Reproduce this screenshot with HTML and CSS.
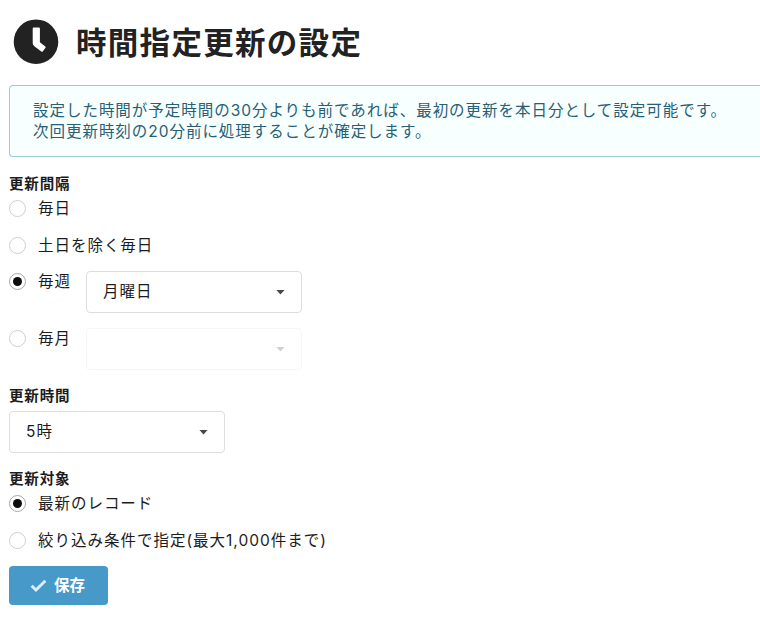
FILE: index.html
```html
<!DOCTYPE html>
<html lang="ja">
<head>
<meta charset="utf-8">
<title>時間指定更新の設定</title>
<link rel="stylesheet" href="styles.css">
</head>
<body>
<main class="page">
  <h1 class="title">
    <svg class="clock" viewBox="0 0 46 46"><circle cx="23" cy="22.700" r="22.300" fill="#222"/><path fill="#fff" d="M20.700 8.500h5.200q1 0 1 1v13.700l5.400 4.200q.8.600.2 1.400l-2.800 3.600q-.6.800-1.400.2l-7-5.300q-1.600-1.200-1.600-3.200V9.500q0-1 1-1z"/></svg>
    <span>時間指定更新の設定</span>
  </h1>
  <div class="message">
    <p class="note">設定した時間が予定時間の30分よりも前であれば、最初の更新を本日分として設定可能です。</p>
    <p class="note">次回更新時刻の20分前に処理することが確定します。</p>
  </div>
  <form class="form">
    <section class="group interval">
      <h2 class="label">更新間隔</h2>
      <div class="row"><i class="radio"></i><span>毎日</span></div>
      <div class="row"><i class="radio"></i><span>土日を除く毎日</span></div>
      <div class="row"><i class="radio checked"></i><span>毎週</span>
        <div class="select"><span>月曜日</span><i class="caret"></i></div></div>
      <div class="row"><i class="radio"></i><span>毎月</span>
        <div class="select disabled"><span></span><i class="caret"></i></div></div>
    </section>
    <section class="group time">
      <h2 class="label">更新時間</h2>
      <div class="select"><span>5時</span><i class="caret"></i></div>
    </section>
    <section class="group target">
      <h2 class="label">更新対象</h2>
      <div class="row"><i class="radio checked"></i><span>最新のレコード</span></div>
      <div class="row"><i class="radio"></i><span class="filter">絞り込み条件で指定(最大1,000件まで)</span></div>
    </section>
    <button class="save" type="button"><svg class="check" viewBox="0 0 16 12"><path d="M1.500 6.200 5.600 10.200 14.500 1.500"/></svg><span>保存</span></button>
  </form>
</main>
</body>
</html>
```
FILE: styles.css
```css
* { box-sizing: border-box; }
body { margin: 0; height: 620px; overflow: hidden; background: #fff; color: #1b1c1d; font: 15.5px/21px Inter, "Noto Sans CJK JP", sans-serif; letter-spacing: .97px; }
h1, h2, p { margin: 0; }
.page { padding: 19px 0 0 9px; }
.title { display: flex; align-items: center; height: 46px; padding-left: 4px; color: #222; font-size: 30.5px; line-height: 46px; letter-spacing: 1.3px; }
.title span { padding-top: 2px; }
.clock { flex: none; width: 46px; height: 46px; margin-right: 17px; }
.message { height: 72px; margin-top: 20px; padding: 14px 0 0 23px; border: 1px solid #9dccd5; border-right: 0; border-radius: 4px 0 0 4px; background: #f8ffff; color: #276075; }
.note { white-space: nowrap; }
.group { display: flex; flex-direction: column; }
.label { height: 20px; font-size: 14.5px; line-height: 22px; letter-spacing: .85px; }
.interval { margin-top: 16px; }
.time { margin-top: 5px; }
.time .select { margin-top: 6px; }
.target { margin-top: 15px; }
.row { display: flex; height: 36.5px; padding-top: 5px; white-space: nowrap; }
.filter { letter-spacing: .99px; }
.radio { flex: none; width: 17px; height: 17px; margin: 2px 12px 0 0; border: 1px solid #cfcfd0; border-radius: 50%; background: #fff; }
.checked { display: grid; place-items: center; border-color: #a6a7a8; }
.checked::after { content: ""; width: 9px; height: 9px; border-radius: 50%; background: #0d0d0d; }
.select { display: flex; align-items: center; justify-content: space-between; flex: none; width: 216px; height: 42px; padding: 0 16px; border: 1px solid #dededf; border-radius: 4px; background: #fff; }
.select span { padding-bottom: 2px; }
.row .select { margin-left: 15px; }
.row:has(.select) { height: 57px; }
.caret { width: 9px; height: 5px; background: #484848; clip-path: polygon(0 0, 100% 0, 50% 100%); }
.disabled { border-color: #f6f6f6; }
.disabled .caret { opacity: .25; }
.save { display: flex; align-items: center; width: 99px; height: 39px; margin-top: 5px; padding: 0 21px; border: 0; border-radius: 4px; background: #4799c8; color: #fff; font: 700 15.5px/21px Inter, "Noto Sans CJK JP", sans-serif; letter-spacing: 0; white-space: nowrap; }
.save span { padding-bottom: 1px; }
.check { flex: none; width: 17px; height: 13px; margin-right: 7px; fill: none; stroke: #dcecf6; stroke-width: 2.8; }
```
